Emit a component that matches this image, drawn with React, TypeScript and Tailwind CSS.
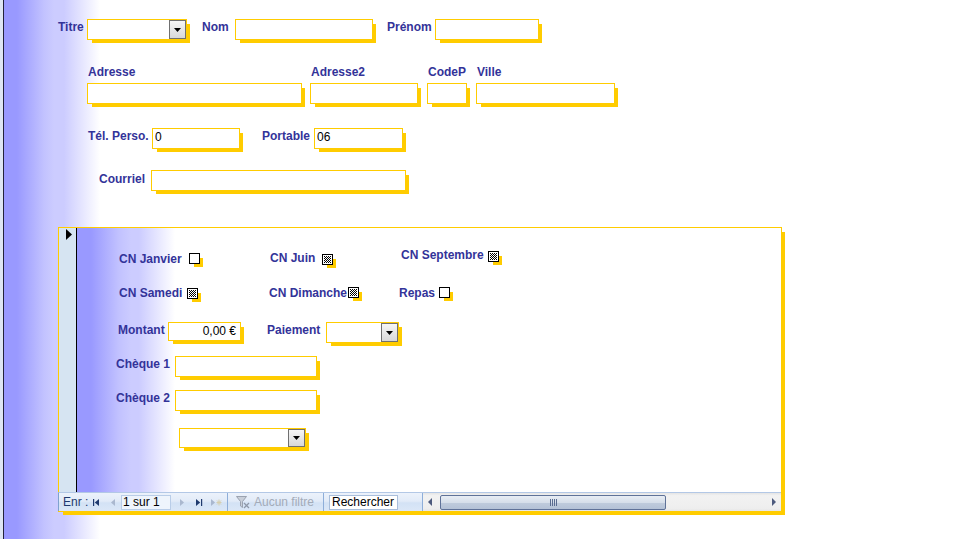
import React from "react";

const lbl =
  "font-bold text-[12px] leading-[14px] text-[#333399] whitespace-nowrap shrink-0";
const box =
  "bg-white border border-[#ffcc00] shadow-[4px_4px_0_-1px_#ffcc00] shrink-0";

function TextBox({
  className,
  value,
  right,
}: {
  className: string;
  value?: string;
  right?: boolean;
}) {
  return (
    <div
      className={`${box} ${className} text-[12px] leading-[14px] text-black pt-[1px] whitespace-nowrap ${
        right ? "text-right pr-[4px]" : "pl-[2px]"
      }`}
    >
      {value}
    </div>
  );
}

function Combo({ className }: { className: string }) {
  return (
    <div className={`${box} ${className} flex justify-end`}>
      <div className="w-[17px] h-full border border-[#707070] bg-[linear-gradient(#f6f6f6,#d8d8d8)] flex items-center justify-center">
        <svg width="7" height="4" viewBox="0 0 7 4">
          <polygon points="0,0 7,0 3.5,4" fill="#000" />
        </svg>
      </div>
    </div>
  );
}

function Check({ checked, className }: { checked?: boolean; className: string }) {
  return (
    <div
      className={`w-[11px] h-[11px] border border-black bg-white p-[1px] shadow-[4px_4px_0_-1px_#ffcc00] shrink-0 ${className}`}
    >
      {checked && (
        <svg width="7" height="7" viewBox="0 0 7 7" className="block">
          <defs>
            <pattern id="chk" width="2" height="2" patternUnits="userSpaceOnUse">
              <rect width="2" height="2" fill="#fff" />
              <rect width="1" height="1" fill="#000" />
              <rect x="1" y="1" width="1" height="1" fill="#000" />
            </pattern>
          </defs>
          <rect width="7" height="7" fill="url(#chk)" />
        </svg>
      )}
    </div>
  );
}

function Col({ label, w }: { label: string; w: string }) {
  return (
    <div className={`flex flex-col gap-[4px] ${w} shrink-0`}>
      <div className={`${lbl} pl-[1px] pt-[1px]`}>{label}</div>
      <TextBox className="w-full h-[21px]" />
    </div>
  );
}

export default function App() {
  return (
    <div className="w-[976px] h-[539px] overflow-hidden font-['Liberation_Sans',Arial,sans-serif] bg-[linear-gradient(to_right,#dde5f3_0px,#dde5f3_3px,#22223a_3px,#22223a_4px,#9999ff_4px,#9999ff_17px,#c2c2ff_44px,#ccccff_54px,#ccccff_64px,#ffffff_100px)]">
      {/* Row 1 */}
      <div className="flex items-start pt-[19px] pl-[58px]">
        <div className={`${lbl} w-[29px] mt-[1px]`}>Titre</div>
        <Combo className="w-[100px] h-[21px]" />
        <div className={`${lbl} ml-[15px] w-[33px] mt-[1px]`}>Nom</div>
        <TextBox className="w-[138px] h-[21px]" />
        <div className={`${lbl} ml-[14px] w-[48px] mt-[1px]`}>Prénom</div>
        <TextBox className="w-[104px] h-[21px]" />
      </div>

      {/* Row 2 */}
      <div className="flex items-start pl-[87px] mt-[24px]">
        <Col label="Adresse" w="w-[215px]" />
        <div className="ml-[8px]">
          <Col label="Adresse2" w="w-[108px]" />
        </div>
        <div className="ml-[9px]">
          <Col label="CodeP" w="w-[40px]" />
        </div>
        <div className="ml-[9px]">
          <Col label="Ville" w="w-[139px]" />
        </div>
      </div>

      {/* Row 3 */}
      <div className="flex items-start pl-[88px] mt-[24px]">
        <div className={`${lbl} w-[64px] mt-[1px]`}>Tél. Perso.</div>
        <TextBox className="w-[88px] h-[21px]" value="0" />
        <div className={`${lbl} ml-[22px] w-[52px] mt-[1px]`}>Portable</div>
        <TextBox className="w-[89px] h-[21px]" value="06" />
      </div>

      {/* Row 4 */}
      <div className="flex items-start pl-[99px] mt-[21px]">
        <div className={`${lbl} w-[52px] mt-[2px]`}>Courriel</div>
        <TextBox className="w-[255px] h-[21px]" />
      </div>

      {/* Subform */}
      <div className="ml-[58px] mt-[36px] w-[724px] h-[285px] border border-[#ffcc00] shadow-[4px_4px_0_-1px_#ffcc00] flex flex-col bg-white">
        <div className="flex h-[264px]">
          <div className="w-[17px] bg-[#d6e4f2] pl-[7px] pt-[1px]">
            <svg width="6" height="11" viewBox="0 0 6 11" className="block">
              <polygon points="0,0 0,11 6,5.5" fill="#000" />
            </svg>
          </div>
          <div className="w-[1px] bg-black" />
          <div className="flex-1 flex flex-col bg-[linear-gradient(to_right,#9999ff_0px,#9999ff_14px,#c2c2ff_42px,#ccccff_54px,#ccccff_62px,#ffffff_98px)]">
            {/* Row A */}
            <div className="flex items-start mt-[20px] h-[38px]">
              <div className={`${lbl} ml-[42px] w-[70px] mt-[4px]`}>CN Janvier</div>
              <Check className="mt-[5px]" />
              <div className={`${lbl} ml-[70px] w-[52px] mt-[3px]`}>CN Juin</div>
              <Check className="mt-[6px]" checked />
              <div className={`${lbl} ml-[68px] w-[87px]`}>CN Septembre</div>
              <Check className="mt-[3px]" checked />
            </div>
            {/* Row B */}
            <div className="flex items-start h-[36px]">
              <div className={`${lbl} ml-[42px] w-[68px]`}>CN Samedi</div>
              <Check className="mt-[2px]" checked />
              <div className={`${lbl} ml-[71px] w-[79px]`}>CN Dimanche</div>
              <Check className="mt-[1px]" checked />
              <div className={`${lbl} ml-[40px] w-[40px]`}>Repas</div>
              <Check className="mt-[1px]" />
            </div>
            {/* Row C */}
            <div className="flex items-start h-[34px]">
              <div className={`${lbl} ml-[41px] w-[50px] mt-[1px]`}>Montant</div>
              <TextBox className="w-[73px] h-[19px]" value="0,00 €" right />
              <div className={`${lbl} ml-[26px] w-[59px] mt-[1px]`}>Paiement</div>
              <Combo className="w-[73px] h-[21px]" />
            </div>
            {/* Row D */}
            <div className="flex items-start h-[34px]">
              <div className={`${lbl} ml-[39px] w-[59px] mt-[1px]`}>Chèque 1</div>
              <TextBox className="w-[142px] h-[21px]" />
            </div>
            {/* Row E */}
            <div className="flex items-start h-[38px]">
              <div className={`${lbl} ml-[39px] w-[59px] mt-[1px]`}>Chèque 2</div>
              <TextBox className="w-[142px] h-[21px]" />
            </div>
            {/* Row F */}
            <div className="flex items-start">
              <Combo className="ml-[102px] w-[127px] h-[20px]" />
            </div>
          </div>
        </div>

        {/* Navigation bar */}
        <div className="-ml-px w-[723px] h-[19px] flex items-stretch border-l border-l-[#7fa2cf] border-t border-t-[#b3c8e6] bg-[linear-gradient(#ecf2fb,#e2ebf8_45%,#d3e2f5_55%,#dbe7f7)] text-[11px] leading-[13px]">
          <div className="flex items-center w-[169px] border-r border-r-[#8eaed9]">
            <span className="ml-[4px] w-[30px] text-[12px] text-[#1f3a6e]">Enr :</span>
            <svg width="6" height="7" viewBox="0 0 6 7" className="shrink-0">
              <rect x="0" y="0" width="1.2" height="7" fill="#1f3a6e" />
              <polygon points="6,0 6,7 1.8,3.5" fill="#1f3a6e" />
            </svg>
            <svg width="4" height="7" viewBox="0 0 4 7" className="ml-[12px] shrink-0">
              <polygon points="4,0 4,7 0,3.5" fill="#aab8cf" />
            </svg>
            <div className="ml-[6px] w-[50px] h-[15px] bg-[#eef4fc] border border-[#b9cde8] pl-[1px] text-[12px] leading-[13px] text-black shrink-0">
              1 sur 1
            </div>
            <svg width="4" height="7" viewBox="0 0 4 7" className="ml-[9px] shrink-0">
              <polygon points="0,0 0,7 4,3.5" fill="#aab8cf" />
            </svg>
            <svg width="7" height="7" viewBox="0 0 7 7" className="ml-[12px] shrink-0">
              <polygon points="0,0 0,7 4.2,3.5" fill="#1f3a6e" />
              <rect x="5" y="0" width="1.2" height="7" fill="#1f3a6e" />
            </svg>
            <svg width="11" height="7" viewBox="0 0 11 7" className="ml-[8px] shrink-0">
              <polygon points="0,0 0,7 4,3.5" fill="#aab8cf" />
              <g stroke="#d6cfae" strokeWidth="1">
                <line x1="8" y1="0.5" x2="8" y2="6.5" />
                <line x1="5.5" y1="3.5" x2="10.5" y2="3.5" />
                <line x1="6" y1="1.5" x2="10" y2="5.5" />
                <line x1="10" y1="1.5" x2="6" y2="5.5" />
              </g>
            </svg>
          </div>
          <div className="flex items-center w-[96px] border-r border-r-[#8eaed9]">
            <svg width="14" height="13" viewBox="0 0 14 13" className="ml-[8px] shrink-0">
              <polygon points="0.5,0.5 10.5,0.5 6.5,5.5 6.5,11.5 4.5,10 4.5,5.5" fill="#c9cfd9" stroke="#9aa2b0" strokeWidth="1" />
              <g stroke="#8f98a8" strokeWidth="1.3">
                <line x1="8" y1="7" x2="13" y2="12" />
                <line x1="13" y1="7" x2="8" y2="12" />
              </g>
            </svg>
            <span className="ml-[4px] text-[12px] text-[#a3abb8] whitespace-nowrap">Aucun filtre</span>
          </div>
          <div className="flex items-center w-[99px] border-r border-r-[#8eaed9]">
            <div className="ml-[5px] w-[69px] h-[15px] bg-white border border-[#a9bedb] pl-[2px] text-[12px] leading-[13px] text-black shrink-0 overflow-hidden whitespace-nowrap">
              Rechercher
            </div>
          </div>
          <div className="flex-1 flex items-center bg-[linear-gradient(#e4e4e4,#f2f2f2_15%,#eeeeee_85%,#e6e6e6)]">
            <svg width="4" height="8" viewBox="0 0 4 8" className="ml-[5px] shrink-0">
              <polygon points="4,0 4,8 0,4" fill="#4d5a7d" />
            </svg>
            <div className="ml-[8px] w-[226px] h-[15px] rounded-[2px] border border-[#5f7298] bg-[linear-gradient(#e8edf4,#d6dfea_50%,#bfcbdc_55%,#b4c2d6)] flex items-center justify-center gap-[1px] shrink-0">
              <div className="w-[1px] h-[7px] bg-[#5a6c90]" />
              <div className="w-[1px] h-[7px] bg-[#5a6c90]" />
              <div className="w-[1px] h-[7px] bg-[#5a6c90]" />
              <div className="w-[1px] h-[7px] bg-[#5a6c90]" />
            </div>
            <div className="flex-1" />
            <svg width="4" height="8" viewBox="0 0 4 8" className="mr-[5px] shrink-0">
              <polygon points="0,0 0,8 4,4" fill="#4d5a7d" />
            </svg>
          </div>
        </div>
      </div>
    </div>
  );
}
